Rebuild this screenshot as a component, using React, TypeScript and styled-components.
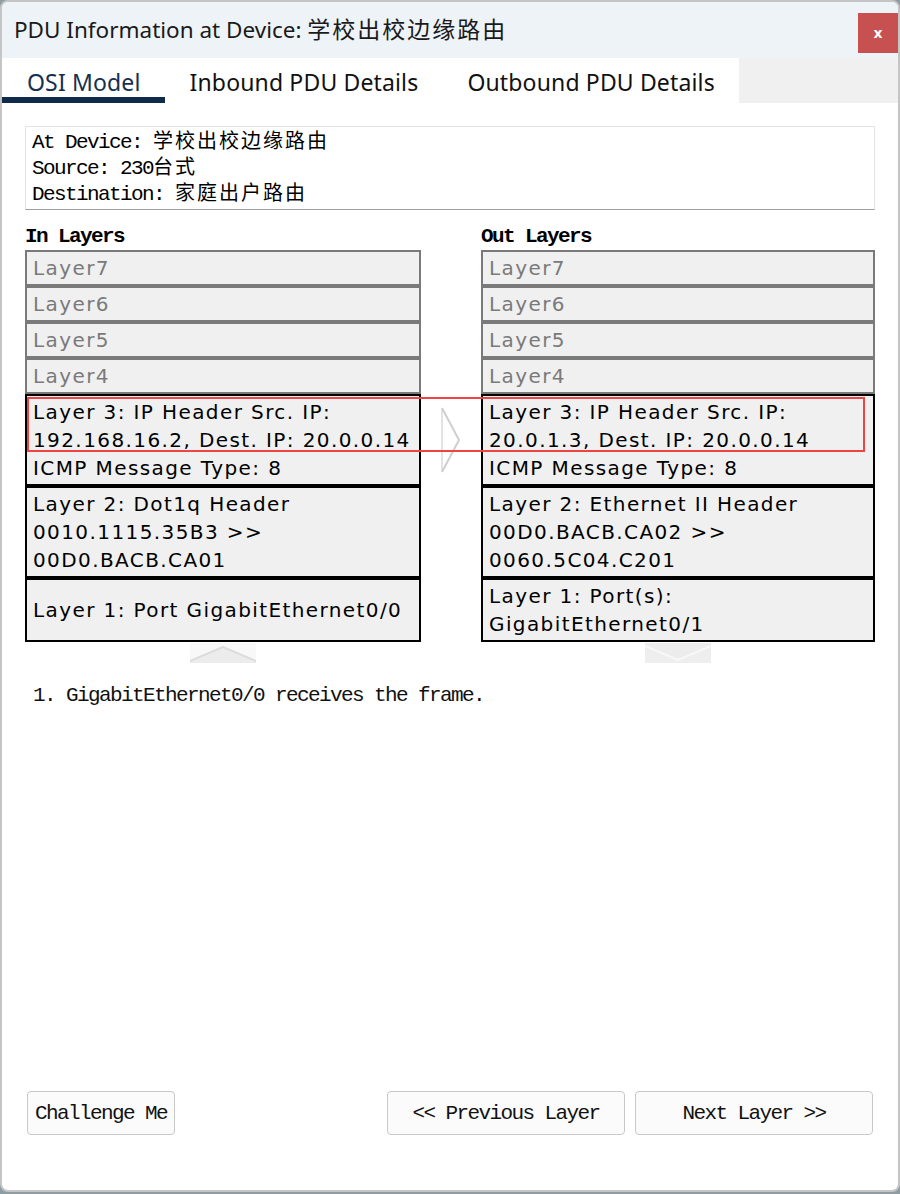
import * as React from "react";
import styled, {createGlobalStyle} from "styled-components";

const GlobalStyle = createGlobalStyle`
  html, body {
    margin: 0;
    padding: 0;
    background: #8f9ca2;
  }
  #root {
    width: 900px;
    height: 1194px;
  }
`;

interface LayerData {
    lines: string[];
    dim?: boolean;
}

interface LayerRowData {
    inLayer: LayerData;
    outLayer: LayerData;
    arrow?: boolean;
    highlight?: boolean;
}

const rows: LayerRowData[] = [
    {inLayer: {lines: ["Layer7"], dim: true}, outLayer: {lines: ["Layer7"], dim: true}},
    {inLayer: {lines: ["Layer6"], dim: true}, outLayer: {lines: ["Layer6"], dim: true}},
    {inLayer: {lines: ["Layer5"], dim: true}, outLayer: {lines: ["Layer5"], dim: true}},
    {inLayer: {lines: ["Layer4"], dim: true}, outLayer: {lines: ["Layer4"], dim: true}},
    {
        inLayer: {lines: ["Layer 3: IP Header Src. IP:", "192.168.16.2, Dest. IP: 20.0.0.14", "ICMP Message Type: 8"]},
        outLayer: {lines: ["Layer 3: IP Header Src. IP:", "20.0.1.3, Dest. IP: 20.0.0.14", "ICMP Message Type: 8"]},
        arrow: true,
        highlight: true,
    },
    {
        inLayer: {lines: ["Layer 2: Dot1q Header", "0010.1115.35B3 >>", "00D0.BACB.CA01"]},
        outLayer: {lines: ["Layer 2: Ethernet II Header", "00D0.BACB.CA02 >>", "0060.5C04.C201"]},
    },
    {
        inLayer: {lines: ["Layer 1: Port GigabitEthernet0/0"]},
        outLayer: {lines: ["Layer 1: Port(s):", "GigabitEthernet0/1"]},
    },
];

const tabs = ["OSI Model", "Inbound PDU Details", "Outbound PDU Details"];

const LayerCell: React.FC<{data: LayerData}> = ({data}) => (
    <LayerBox $dim={data.dim}>
        {data.lines.map((line, i) => <div key={i}>{line}</div>)}
    </LayerBox>
);

const App: React.FC = () => {
    return (
        <>
            <GlobalStyle/>
            <Window>
                <TitleBar>
                    <Title>PDU Information at Device: <Cjk $size={23}>学校出校边缘路由</Cjk></Title>
                    <CloseButton>x</CloseButton>
                </TitleBar>
                <TabBar>
                    <TabStrip>
                        {tabs.map((t, i) => <Tab key={t} $active={i === 0}>{t}</Tab>)}
                    </TabStrip>
                </TabBar>
                <Content>
                    <InfoBox>
                        <InfoLine>At Device: <Cjk $size={20}>学校出校边缘路由</Cjk></InfoLine>
                        <InfoLine>Source: 230<Cjk $size={20}>台式</Cjk></InfoLine>
                        <InfoLine>Destination: <Cjk $size={20}>家庭出户路由</Cjk></InfoLine>
                    </InfoBox>
                    <LayerRow>
                        <ColumnLabel>In Layers</ColumnLabel>
                        <span/>
                        <ColumnLabel>Out Layers</ColumnLabel>
                    </LayerRow>
                    <LayerStack>
                        {rows.map((row, i) => (
                            <LayerRow key={i} $relative={row.highlight}>
                                <LayerCell data={row.inLayer}/>
                                <ArrowCell>
                                    {row.arrow && (
                                        <svg width="22" height="68" viewBox="0 0 22 68">
                                            <path d="M2 2 L2 66" stroke="#e3e3e3" strokeWidth="2" fill="none"/>
                                            <path d="M2 2 L19 34 L2 66" stroke="#cfcfcf" strokeWidth="2" fill="none"/>
                                        </svg>
                                    )}
                                </ArrowCell>
                                <LayerCell data={row.outLayer}/>
                                {row.highlight && <Highlight/>}
                            </LayerRow>
                        ))}
                        <LayerRow>
                            <ScrollCell>
                                <svg width="66" height="20" viewBox="0 0 66 20">
                                    <rect width="66" height="20" fill="#ececec"/>
                                    <polygon points="0,0 66,0 66,17 33,3 0,17" fill="#f8f8f8"/>
                                    <polyline points="0,18 33,4 66,18" stroke="#dcdcdc" strokeWidth="2" fill="none"/>
                                </svg>
                            </ScrollCell>
                            <span/>
                            <ScrollCell>
                                <svg width="66" height="20" viewBox="0 0 66 20">
                                    <rect width="66" height="20" fill="#ececec"/>
                                    <polygon points="0,4 33,17 66,4 66,20 0,20" fill="#eeeeee"/>
                                    <polyline points="0,3 33,17 66,3" stroke="#f8f8f8" strokeWidth="2" fill="none"/>
                                </svg>
                            </ScrollCell>
                        </LayerRow>
                    </LayerStack>
                    <StepText>1. GigabitEthernet0/0 receives the frame.</StepText>
                </Content>
                <Footer>
                    <FooterButton $width={148}>Challenge Me</FooterButton>
                    <ButtonGroup>
                        <FooterButton $width={238} $center>&lt;&lt; Previous Layer</FooterButton>
                        <FooterButton $width={238} $center>Next Layer &gt;&gt;</FooterButton>
                    </ButtonGroup>
                </Footer>
            </Window>
        </>
    );
};

export default App;


const Window = styled.div`
  box-sizing: border-box;
  width: 900px;
  height: 1192px;
  border: 2px solid #c5c5c5;
  border-radius: 8px;
  background: white;
  display: flex;
  flex-direction: column;
  overflow: hidden;
`;

const TitleBar = styled.div`
  height: 56px;
  flex-shrink: 0;
  background: #eef3f8;
  display: flex;
  align-items: center;
  justify-content: space-between;
  padding-left: 12px;
`;

const Title = styled.div`
  font-family: "Noto Sans", "Noto Sans CJK SC", sans-serif;
  font-size: 22.5px;
  line-height: 30px;
  color: #1a1a1a;
`;

const Cjk = styled.span<{ $size: number }>`
  font-family: "Noto Sans CJK SC", sans-serif;
  font-size: ${p => p.$size}px;
  line-height: 1;
  letter-spacing: 2px;
`;

const CloseButton = styled.div`
  width: 40px;
  height: 40px;
  margin-top: 6px;
  background: #c75050;
  color: white;
  font-family: "DejaVu Sans", sans-serif;
  font-weight: bold;
  font-size: 14px;
  display: flex;
  align-items: center;
  justify-content: center;
`;

const TabBar = styled.div`
  height: 45px;
  flex-shrink: 0;
  background: #f0f0f0;
  display: flex;
`;

const TabStrip = styled.div`
  background: white;
  display: flex;
`;

const Tab = styled.div<{ $active?: boolean }>`
  box-sizing: border-box;
  height: 45px;
  padding: 3px 24px 0 25px;
  display: flex;
  align-items: center;
  font-family: "Noto Sans", sans-serif;
  font-size: 23px;
  letter-spacing: 0.15px;
  color: ${p => p.$active ? "#16304f" : "#111"};
  box-shadow: ${p => p.$active ? "inset 0 -6px 0 #0f2a4b" : "none"};
`;

const Content = styled.div`
  flex: 1;
  padding: 23px 23px 0 23px;
  display: flex;
  flex-direction: column;
`;

const monoText = `
  font-family: "Liberation Mono", "Noto Sans CJK SC", monospace;
  font-size: 21px;
  letter-spacing: -1.6px;
`;

const InfoBox = styled.div`
  ${monoText};
  border: 1px solid #e4e4e4;
  border-bottom-color: #a0a0a0;
  padding: 3px 6px 1px;
  color: #000;
  height: 78px;
`;

const InfoLine = styled.div`
  height: 26px;
  line-height: 26px;
  white-space: nowrap;
`;

const ColumnLabel = styled.div`
  ${monoText};
  margin-top: 15px;
  margin-bottom: 1px;
  font-weight: bold;
  line-height: 24px;
  color: #000;
`;

const LayerStack = styled.div`
  display: flex;
  flex-direction: column;
`;

const LayerRow = styled.div<{ $relative?: boolean }>`
  display: grid;
  grid-template-columns: 396px 60px 394px;
  position: ${p => p.$relative ? "relative" : "static"};
`;

const LayerBox = styled.div<{ $dim?: boolean }>`
  border: 2px solid ${p => p.$dim ? "#7a7a7a" : "#000"};
  background: #f0f0f0;
  padding: 2px 6px;
  display: flex;
  flex-direction: column;
  justify-content: center;
  font-family: "DejaVu Sans", sans-serif;
  font-size: 20px;
  letter-spacing: 1.4px;
  line-height: 28px;
  color: ${p => p.$dim ? "#7a7a7a" : "#000"};
  white-space: nowrap;
`;

const ArrowCell = styled.div`
  display: flex;
  align-items: center;
  justify-content: center;
`;

const Highlight = styled.div`
  position: absolute;
  top: 3px;
  left: 2px;
  right: 10px;
  height: 51px;
  border: 2px solid #f04444;
  pointer-events: none;
`;

const ScrollCell = styled.div`
  display: flex;
  justify-content: center;
  padding-top: 1px;
`;

const StepText = styled.div`
  ${monoText};
  margin: 22px 0 0 8px;
  line-height: 22px;
  color: #111;
`;

const Footer = styled.div`
  flex-shrink: 0;
  display: flex;
  justify-content: space-between;
  padding: 0 25px 55px 25px;
`;

const ButtonGroup = styled.div`
  display: flex;
  gap: 10px;
`;

const FooterButton = styled.div<{ $width: number; $center?: boolean }>`
  ${monoText};
  box-sizing: border-box;
  width: ${p => p.$width}px;
  height: 44px;
  border: 1px solid #c9c9c9;
  border-radius: 4px;
  background: #fbfbfb;
  display: flex;
  align-items: center;
  justify-content: ${p => p.$center ? "center" : "flex-start"};
  padding-left: ${p => p.$center ? 0 : 7}px;
  color: #111;
`;
